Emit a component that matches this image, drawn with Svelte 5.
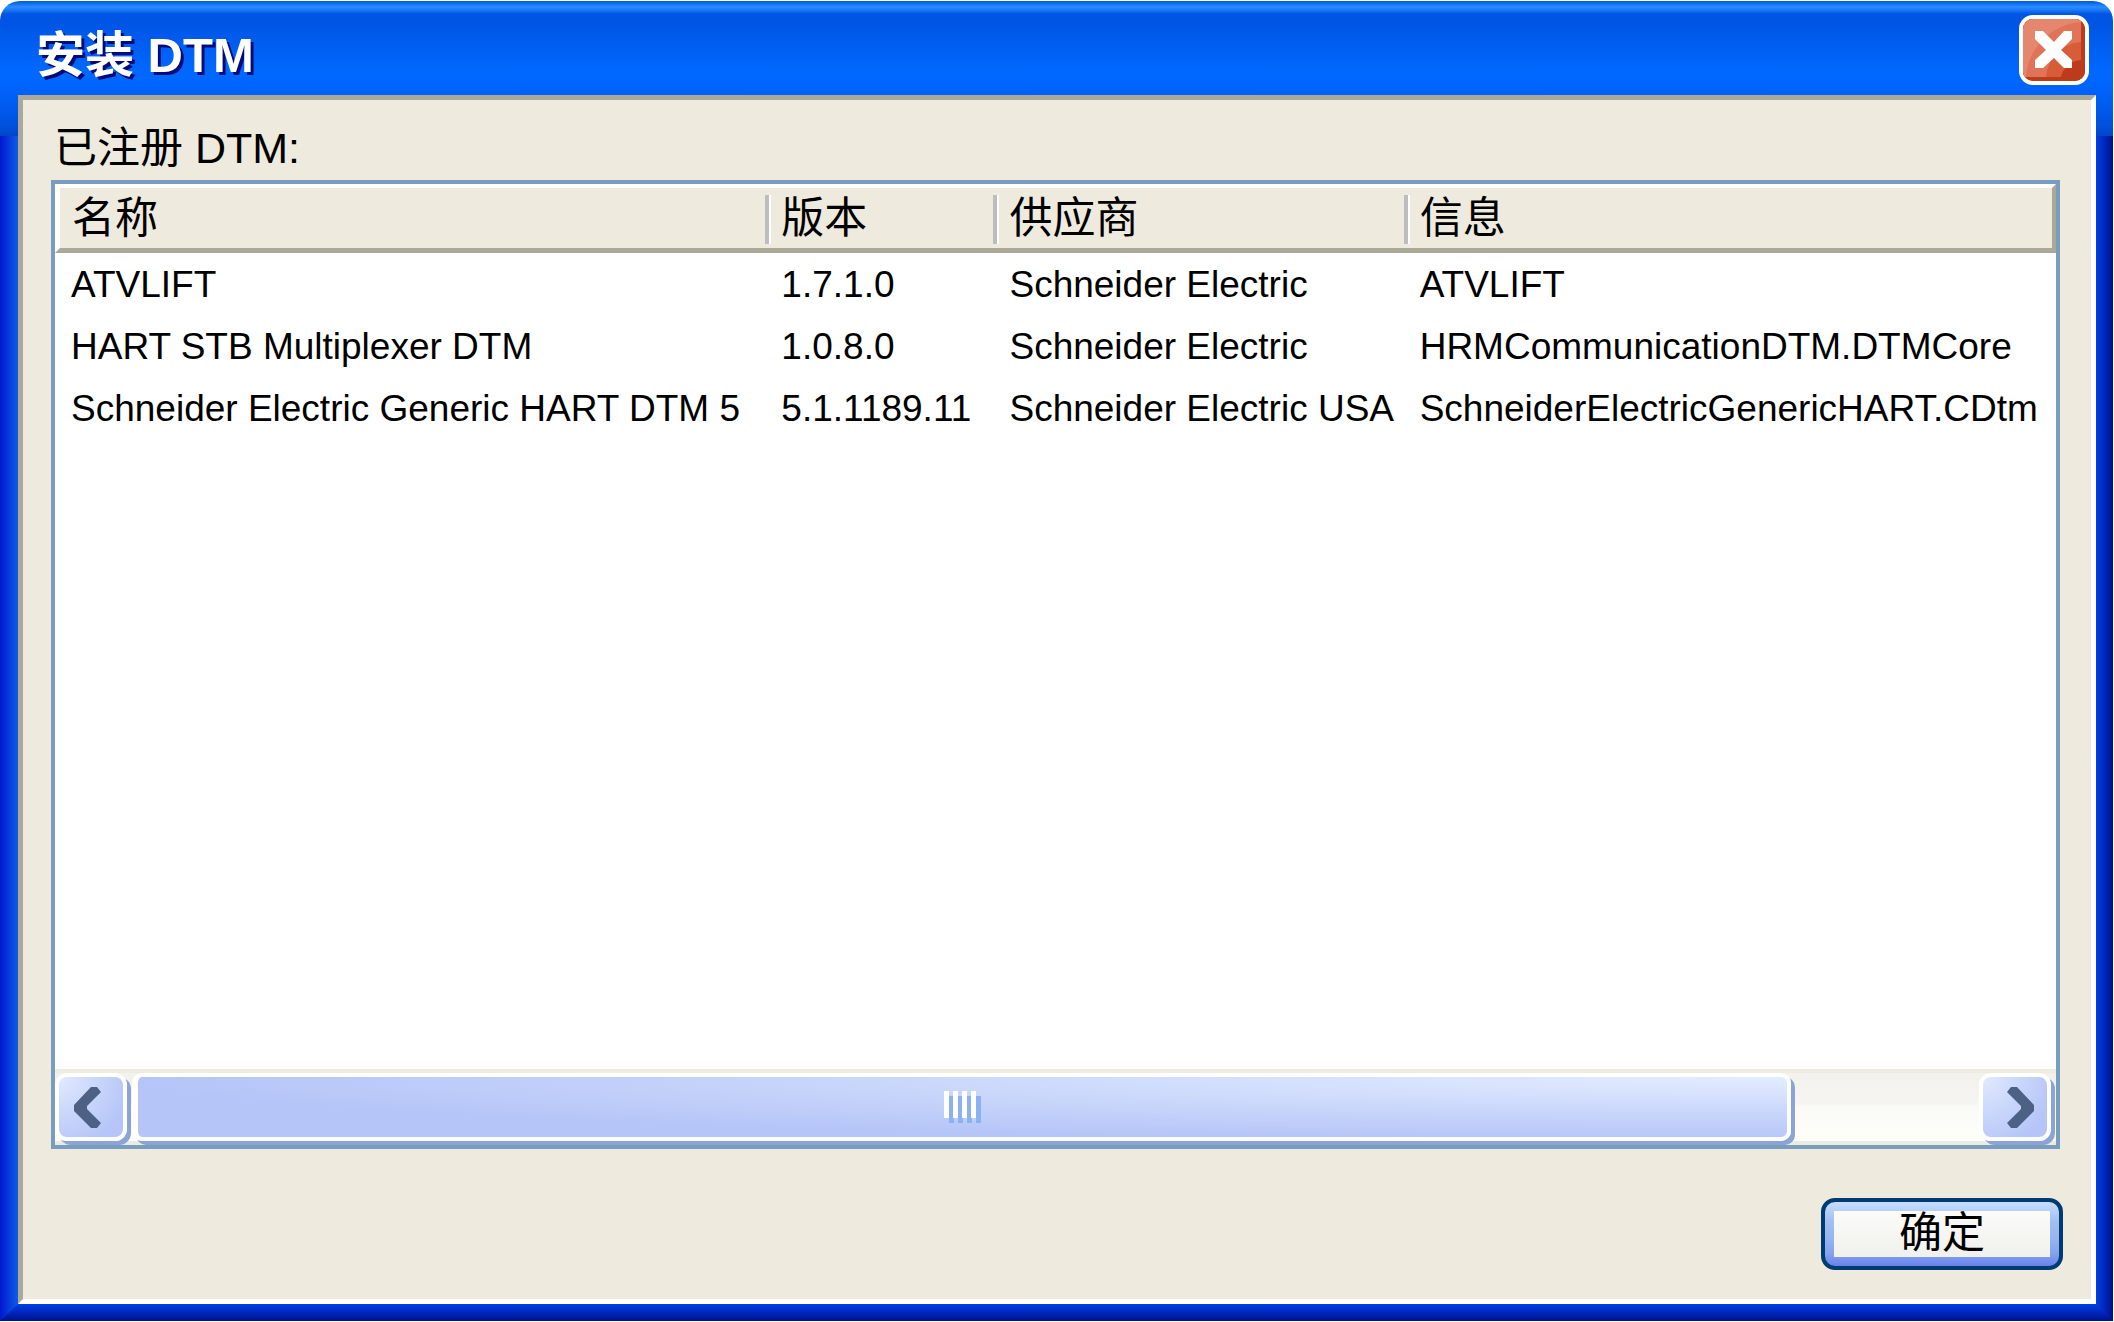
<script>
  const columns = [
    { key: 'name', label: '名称', width: 35.5 },
    { key: 'version', label: '版本', width: 11.4 },
    { key: 'vendor', label: '供应商', width: 20.5 },
    { key: 'info', label: '信息', width: 32.6 }
  ];

  const dtms = [
    { name: 'ATVLIFT', version: '1.7.1.0', vendor: 'Schneider Electric', info: 'ATVLIFT' },
    {
      name: 'HART STB Multiplexer DTM',
      version: '1.0.8.0',
      vendor: 'Schneider Electric',
      info: 'HRMCommunicationDTM.DTMCore'
    },
    {
      name: 'Schneider Electric Generic HART DTM 5',
      version: '5.1.1189.11',
      vendor: 'Schneider Electric USA',
      info: 'SchneiderElectricGenericHART.CDtm'
    }
  ];

  // share of the track covered by the thumb, in percent
  const thumbSize = 89.8;
  const maxScroll = 100 - thumbSize;

  let open = $state(true);
  let scroll = $state(0);

  function scrollBy(step) {
    scroll = Math.min(maxScroll, Math.max(0, scroll + step));
  }

  function close() {
    open = false;
  }
</script>

<main>
  {#if open}
    <div class="window" role="dialog" aria-labelledby="title">
      <header>
        <h1 id="title">安装 DTM</h1>
        <button class="close" type="button" aria-label="关闭" onclick={close}>
          <svg viewBox="0 0 62 62" aria-hidden="true">
            <rect width="62" height="62" fill="#bd3a1b" />
            <path d="M0 0H58V41A22 22 0 0 0 38 58H0Z" fill="#d75c38" />
            <path d="M0 0H58V23A38 38 0 0 0 23 58H0Z" fill="#e17358" />
            <path d="M0 0H58V3A59 59 0 0 0 3 58H0Z" fill="#e5866e" />
            <path
              d="M12 12H20L31 23L41 12H49V20L38 31L49 41V49H41L31 39L20 49H12V41L23 31L12 20Z"
              fill="#fff"
            />
          </svg>
        </button>
      </header>

      <div class="client">
        <p id="list-label">已注册 DTM:</p>

        <div class="list">
          <table aria-labelledby="list-label">
            <colgroup>
              {#each columns as column}
                <col style="width: {column.width}%" />
              {/each}
            </colgroup>
            <thead>
              <tr>
                {#each columns as column}
                  <th scope="col">{column.label}</th>
                {/each}
              </tr>
            </thead>
            <tbody>
              {#each dtms as dtm}
                <tr>
                  {#each columns as column}
                    <td>{dtm[column.key]}</td>
                  {/each}
                </tr>
              {/each}
            </tbody>
          </table>

          <div class="scrollbar">
            <button class="arrow" type="button" aria-label="向左滚动" onclick={() => scrollBy(-2)}>
              <svg viewBox="0 0 64 60" aria-hidden="true">
                <path d="M32 10H38L42 15L28 29V32L42 46L38 51H32L15 34V28Z" fill="#4d6185" />
              </svg>
            </button>
            <div class="track">
              <div class="thumb" style="width: {thumbSize}%; margin-left: {scroll}%">
                <svg viewBox="0 0 37 32" aria-hidden="true">
                  {#each [0, 9, 18, 27] as x}
                    <rect x={x + 5} y="5" width="5" height="27" fill="#8ab2f2" />
                    <rect {x} y="0" width="5" height="27" fill="#fff" />
                  {/each}
                </svg>
              </div>
            </div>
            <button class="arrow" type="button" aria-label="向右滚动" onclick={() => scrollBy(2)}>
              <svg viewBox="0 0 64 60" aria-hidden="true">
                <path d="M34 10H28L24 15L38 29V32L24 46L28 51H34L51 34V28Z" fill="#4d6185" />
              </svg>
            </button>
          </div>
        </div>

        <div class="actions">
          <button class="ok" type="button" onclick={close}><span>确定</span></button>
        </div>
      </div>

      <div class="bottom-edge"></div>
    </div>
  {/if}
</main>

<style>
  :global(body) {
    background: #fff;
  }

  main {
    display: flex;
    box-sizing: border-box;
    min-height: 100vh;
    padding: 1px 1px 1px 0;
    font-family: 'Liberation Sans', Arial, 'Noto Sans CJK SC', sans-serif;
    font-size: 43px;
    color: #000;
  }

  button {
    padding: 0;
    font: inherit;
    color: inherit;
    cursor: pointer;
  }

  svg {
    display: block;
  }

  .window {
    flex: 1;
    display: flex;
    flex-direction: column;
    min-width: 0;
    border-radius: 20px 20px 0 0;
    overflow: hidden;
    background:
      linear-gradient(
          #0058e0 0,
          #2a8dff 6px,
          #1c78f8 9px,
          #0055e4 13px,
          #0055e4 22px,
          #0068ff 70px,
          #0066ff 82px,
          #005bf0 105px,
          #0050dc 125px,
          #0046c8 135px
        )
        top / 100% 135px no-repeat,
      linear-gradient(to right, #0018d0, #0f5ce8) left / 18px 100% no-repeat,
      linear-gradient(to right, #003fe8, #00108c) right / 17px 100% no-repeat;
  }

  header {
    display: flex;
    align-items: center;
    justify-content: space-between;
    box-sizing: border-box;
    height: 94px;
    padding: 4px 24px 0 36px;
  }

  h1 {
    margin: 0;
    padding-top: 10px;
    font-size: 49px;
    line-height: 60px;
    font-weight: bold;
    color: #fff;
    text-shadow: 3px 3px 0 #000a78;
  }

  .close {
    box-sizing: border-box;
    width: 70px;
    height: 70px;
    border: 4px solid #fff;
    border-radius: 14px;
    overflow: hidden;
    background: #bd3a1b;
  }

  .client {
    flex: 1;
    display: flex;
    flex-direction: column;
    margin: 0 17px 0 18px;
    padding: 18px 28px 29px;
    border: 5px solid;
    border-color: #aca899 #fff #fff #aca899;
    background: #eeeade;
  }

  p {
    margin: 0 0 2px 3px;
    line-height: 60px;
  }

  .list {
    flex: 1;
    display: flex;
    flex-direction: column;
    justify-content: space-between;
    margin-right: 3px;
    border: 4px solid #7a9cbf;
    overflow: hidden;
    background: #fff;
  }

  table {
    width: 100%;
    table-layout: fixed;
    border-collapse: separate;
    border-spacing: 0;
  }

  th {
    height: 60px;
    padding: 0 0 0 16px;
    border-top: 4px solid #fff;
    border-bottom: 5px solid #aca899;
    font-weight: normal;
    line-height: 60px;
    text-align: left;
    background: linear-gradient(to right, #bdbdbd 4px, #fff 4px) 0 7px / 6px 49px no-repeat #eeeade;
  }

  th:first-child {
    padding-left: 12px;
    border-left: 5px solid #fff;
    background: #eeeade;
  }

  th:last-child {
    border-right: 4px solid #aca899;
  }

  td {
    padding: 2px 0 0 16px;
    font-size: 37px;
    line-height: 60px;
    white-space: nowrap;
  }

  .scrollbar {
    display: flex;
    height: 68px;
    border-top: 4px solid #ecece0;
    border-bottom: 4px solid #ecebe2;
    background: linear-gradient(#f3f1ec, #f7f5f1 45%, #fafbf6 50%, #fefef9);
  }

  .arrow {
    flex: none;
    box-sizing: border-box;
    width: 72px;
    margin-right: 5px;
    border: 4px solid #fff;
    border-radius: 12px;
    background: radial-gradient(circle at 0 0, #e1eaff, #b5c5f7 72px);
    box-shadow: 4px 4px 0 #8aa4d8;
  }

  .track {
    flex: 1;
    display: flex;
  }

  .thumb {
    display: flex;
    align-items: center;
    justify-content: center;
    box-sizing: border-box;
    border: 4px solid #fff;
    border-left-width: 6px;
    border-radius: 10px;
    background: radial-gradient(100% 105% at 100% 0, #e3edff, #b5c5f7);
    box-shadow: 4px 4px 0 #8aa4d8;
  }

  .thumb svg {
    width: 37px;
    height: 32px;
  }

  .actions {
    display: flex;
    justify-content: flex-end;
    margin-top: 49px;
  }

  .ok {
    box-sizing: border-box;
    width: 242px;
    height: 72px;
    padding: 9px;
    border: 4px solid #003c74;
    border-radius: 14px;
    background: linear-gradient(#c6deff, #a3bff0 30%, #98b6ee 55%, #84a4ec 80%, #6982ee);
  }

  .ok span {
    display: block;
    height: 46px;
    line-height: 44px;
    background: linear-gradient(#fbfbf9, #f0f0ec);
  }

  /* mitred where it meets the side edges */
  .bottom-edge {
    height: 17px;
    background: linear-gradient(#003fe8, #00108c);
    clip-path: polygon(0 100%, 18px 0, calc(100% - 17px) 0, 100% 100%);
  }
</style>
